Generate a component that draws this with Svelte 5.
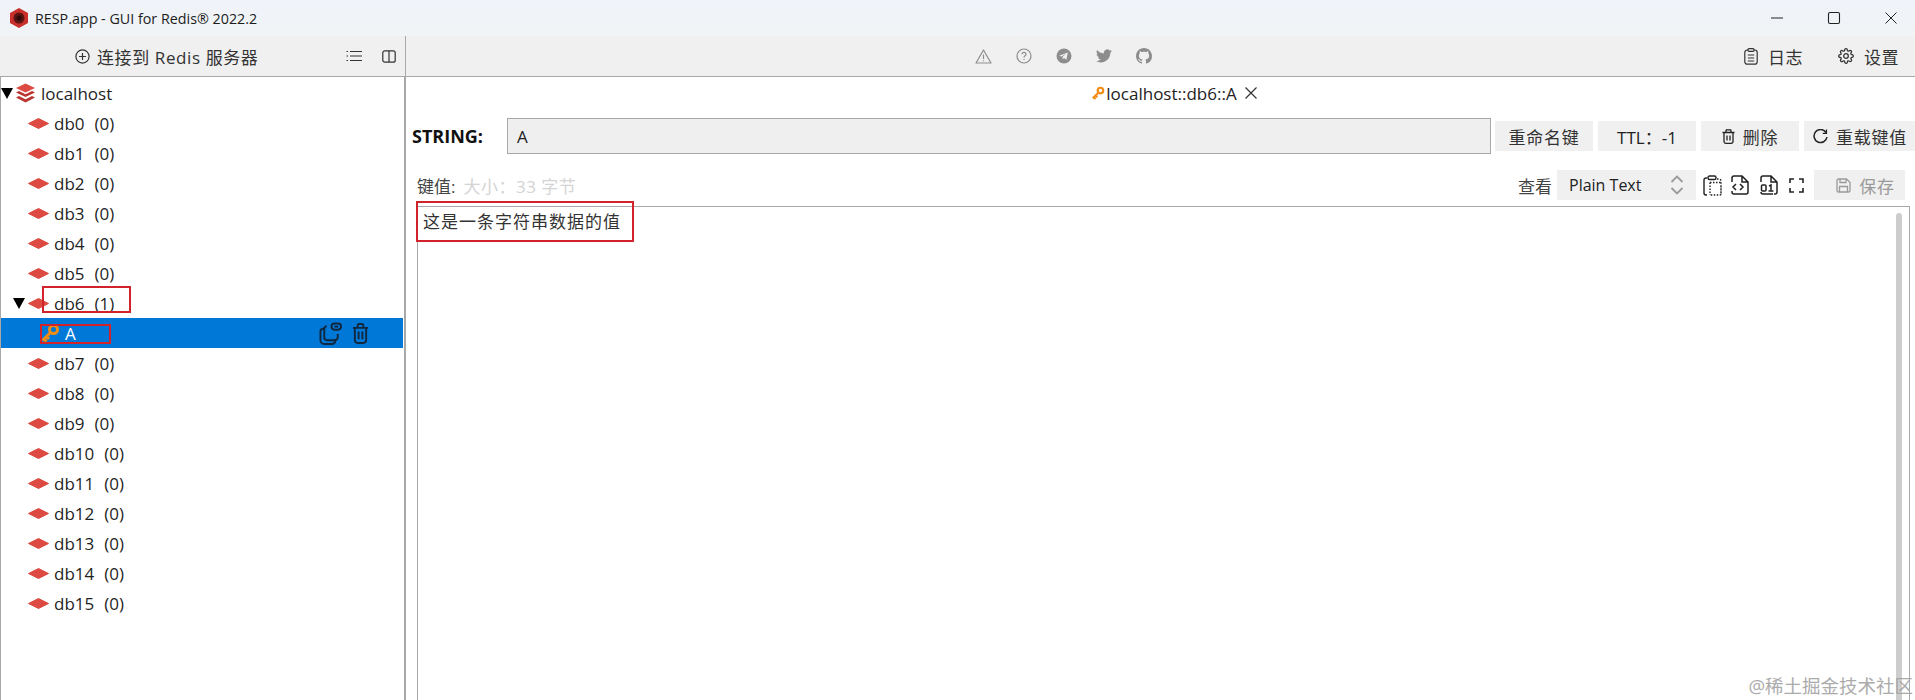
<script>
  const dbs = Array.from({ length: 16 }, (_, i) => ({ name: `db${i}`, count: i === 6 ? 1 : 0 }));
</script>

{#snippet dbIcon()}
  <svg class="db-icon" width="21" height="11" viewBox="0 0 21 11"><path d="M10.5 0.5 20.5 5.5 10.5 10.5 0.5 5.5Z" fill="#dc4a41" stroke="#dc4a41" stroke-linejoin="round"/></svg>
{/snippet}

{#snippet keyIcon(size)}
  <svg width={size} height={size} viewBox="0 0 20 20" fill="none"><circle cx="13.5" cy="6.5" r="4" stroke="#f28c13" stroke-width="3"/><path d="M10.5 9.5 2.5 17.5M4 16l2.5 2.5M6.5 13.5 9 16" stroke="#f28c13" stroke-width="3"/></svg>
{/snippet}

<div class="window">
  <header class="titlebar">
    <svg class="logo" width="18" height="20" viewBox="0 0 18 20"><path d="M9 0 18 5v10l-9 5-9-5V5Z" fill="#c9302c"/><circle cx="9" cy="10" r="5.5" fill="#5a1512"/><circle cx="9" cy="10" r="2.5" fill="#2b0a09"/></svg>
    <span class="title">RESP.app - GUI for Redis® 2022.2</span>
    <div class="win-controls">
      <svg width="14" height="14" viewBox="0 0 14 14"><path d="M1 7h12" stroke="#222" stroke-width="1"/></svg>
      <svg width="14" height="14" viewBox="0 0 14 14" fill="none"><rect x="1.5" y="1.5" width="11" height="11" rx="1.5" stroke="#222" stroke-width="1.1"/></svg>
      <svg width="14" height="14" viewBox="0 0 14 14"><path d="M1.5 1.5l11 11M12.5 1.5l-11 11" stroke="#222" stroke-width="1"/></svg>
    </div>
  </header>

  <div class="toolbar">
    <div class="toolbar-left">
      <button class="connect">
        <svg width="15" height="15" viewBox="0 0 15 15" fill="none" stroke="#333" stroke-width="1.2"><circle cx="7.5" cy="7.5" r="6.6"/><path d="M7.5 4v7M4 7.5h7"/></svg>
        连接到 Redis 服务器
      </button>
      <svg class="tool-list" width="16" height="12" viewBox="0 0 16 12" stroke="#333" stroke-width="1.2"><path d="M4 1.5h12M4 6h12M4 10.5h12M0.5 1.5h1.5M0.5 6h1.5M0.5 10.5h1.5"/></svg>
      <svg class="tool-split" width="14" height="13" viewBox="0 0 14 13" fill="none" stroke="#333" stroke-width="1.2"><rect x="0.8" y="0.8" width="12.4" height="11.4" rx="2"/><path d="M7 1v11"/></svg>
    </div>
    <div class="toolbar-center">
      <svg width="17" height="15" viewBox="0 0 17 15" fill="none" stroke="#8d8d8d" stroke-width="1.2"><path d="M8.5 1 16 14H1Z" stroke-linejoin="round"/><path d="M8.5 5.5v4.5M8.5 11.3v1"/></svg>
      <svg width="16" height="16" viewBox="0 0 16 16" fill="none" stroke="#8d8d8d" stroke-width="1.2"><circle cx="8" cy="8" r="7"/><path d="M6 6.3c0-2.6 4-2.6 4 0 0 1.6-2 1.500-2 3.200M8 11v1"/></svg>
      <svg width="16" height="16" viewBox="0 0 16 16"><circle cx="8" cy="8" r="7.500" fill="#8d8d8d"/><path d="M3.200 7.800 11.800 4.400 10.400 11.800 8 10 6.700 11.200 6.500 9 10 5.800 5.500 8.600Z" fill="#f0f1f2"/></svg>
      <svg width="16" height="14" viewBox="0 0 24 20"><path d="M24 2.400a10 10 0 0 1-2.800.8 5 5 0 0 0 2.200-2.700 10 10 0 0 1-3.100 1.200A4.900 4.900 0 0 0 11.900 6.100 14 14 0 0 1 1.700 1a4.900 4.900 0 0 0 1.500 6.600 4.900 4.900 0 0 1-2.200-.6c0 2.400 1.700 4.400 3.900 4.900a4.900 4.900 0 0 1-2.200.1 4.900 4.900 0 0 0 4.600 3.400A9.900 9.900 0 0 1 0 17.400 14 14 0 0 0 7.500 19.600c9.100 0 14.300-7.700 14-14.600A10 10 0 0 0 24 2.400Z" fill="#8d8d8d"/></svg>
      <svg width="16" height="16" viewBox="0 0 16 16"><path d="M8 0C3.580 0 0 3.580 0 8c0 3.540 2.290 6.530 5.470 7.590.4.070.55-.17.55-.38 0-.19-.01-.82-.01-1.490-2.010.37-2.530-.49-2.690-.94-.09-.23-.48-.94-.82-1.130-.28-.15-.68-.52-.01-.53.63-.01 1.080.58 1.230.82.72 1.210 1.870.87 2.330.66.070-.52.280-.87.510-1.070-1.780-.2-3.640-.89-3.640-3.950 0-.87.310-1.590.82-2.150-.08-.2-.36-1.020.08-2.120 0 0 .67-.21 2.200.82.640-.18 1.320-.27 2-.27s1.360.09 2 .27c1.530-1.040 2.200-.82 2.200-.82.44 1.100.16 1.920.08 2.120.51.560.82 1.270.82 2.150 0 3.070-1.870 3.750-3.650 3.950.29.250.54.730.54 1.480 0 1.070-.01 1.930-.01 2.200 0 .21.150.46.550.38A8 8 0 0 0 16 8c0-4.420-3.580-8-8-8Z" fill="#8d8d8d"/></svg>
    </div>
    <div class="toolbar-right">
      <button class="flat">
        <svg width="14" height="17" viewBox="0 0 14 17" fill="none" stroke="#333" stroke-width="1.2"><rect x="0.8" y="2" width="12.400" height="14.200" rx="2.500"/><rect x="4" y="0.700" width="6" height="2.600" rx="1" fill="#f0f0f0"/><path d="M3.800 7h6.400M3.800 10h6.400M3.800 13h6.400"/></svg>
        日志
      </button>
      <button class="flat">
        <svg width="16" height="16" viewBox="0 0 24 24" fill="none" stroke="#333" stroke-width="1.900"><circle cx="12" cy="12" r="3.500"/><path d="M19.4 15a1.65 1.65 0 0 0 .33 1.82l.06.06a2 2 0 0 1 0 2.83 2 2 0 0 1-2.83 0l-.06-.06a1.65 1.65 0 0 0-1.82-.33 1.65 1.65 0 0 0-1 1.51V21a2 2 0 0 1-2 2 2 2 0 0 1-2-2v-.09A1.65 1.65 0 0 0 9 19.4a1.65 1.65 0 0 0-1.82.33l-.06.06a2 2 0 0 1-2.83 0 2 2 0 0 1 0-2.83l.06-.06a1.65 1.65 0 0 0 .33-1.82 1.65 1.65 0 0 0-1.51-1H3a2 2 0 0 1-2-2 2 2 0 0 1 2-2h.09A1.65 1.65 0 0 0 4.600 9a1.65 1.65 0 0 0-.33-1.82l-.06-.06a2 2 0 0 1 0-2.83 2 2 0 0 1 2.83 0l.06.06a1.65 1.65 0 0 0 1.82.33H9a1.65 1.65 0 0 0 1-1.51V3a2 2 0 0 1 2-2 2 2 0 0 1 2 2v.09a1.65 1.65 0 0 0 1 1.51 1.65 1.65 0 0 0 1.82-.33l.06-.06a2 2 0 0 1 2.83 0 2 2 0 0 1 0 2.83l-.06.06a1.65 1.65 0 0 0-.33 1.82V9a1.65 1.65 0 0 0 1.51 1H21a2 2 0 0 1 2 2 2 2 0 0 1-2 2h-.09a1.65 1.65 0 0 0-1.51 1z"/></svg>
        设置
      </button>
    </div>
  </div>

  <div class="body">
    <aside class="tree">
      <div class="row root">
        <span class="arrow big"></span>
        <svg width="21" height="21" viewBox="0 0 21 21"><path d="M10.500 0.500 20 5 10.500 9.500 1 5Z" fill="#dc4a41"/><path d="M1 9.500l3-1.400 6.500 3.100L17 8.100l3 1.400-9.500 4.500Z" fill="#b9352f"/><path d="M1 14.500l3-1.400 6.500 3.100L17 13.100l3 1.400-9.500 5Z" fill="#b9352f"/></svg>
        <span>localhost</span>
      </div>
      {#each dbs as db}
        <div class="row db">
          {#if db.count}<span class="arrow"></span>{/if}
          {@render dbIcon()}
          <span class="db-name">{db.name}</span>
          <span>({db.count})</span>
        </div>
        {#if db.count}
          <div class="row key">
            {@render keyIcon(20)}
            <span class="key-name">A</span>
            <svg class="key-copy" width="23" height="23" viewBox="0 0 24 24" fill="none" stroke="#10273d" stroke-width="2"><path d="M6 7H4a3 3 0 0 0-2.500 3v9a4 4 0 0 0 4 4h8a4 4 0 0 0 3.500-3v-2"/><path d="M8 4.500a2.500 2.500 0 0 0-2.500 2.500v9a3 3 0 0 0 3 3h8a3 3 0 0 0 3-3v-3.500"/><rect x="13" y="1.500" width="10" height="6.500" rx="3.200"/><path d="M16 4.800h4"/></svg>
            <svg class="key-trash" width="17" height="21" viewBox="0 0 18 22" fill="none" stroke="#10273d" stroke-width="2"><path d="M1 5h16M6 5V2.500A1.500 1.500 0 0 1 7.500 1h3A1.500 1.500 0 0 1 12 2.500V5M3 5v13a3 3 0 0 0 3 3h6a3 3 0 0 0 3-3V5M7 9v8M11 9v8"/></svg>
          </div>
        {/if}
      {/each}
    </aside>

    <main class="content">
      <div class="tab">
        {@render keyIcon(14)}
        <span>localhost::db6::A</span>
        <svg width="14" height="14" viewBox="0 0 14 14"><path d="M1.500 1.500l11 11M12.500 1.500l-11 11" stroke="#333" stroke-width="1.200"/></svg>
      </div>

      <div class="key-row">
        <b class="type">STRING:</b>
        <div class="key-input">A</div>
        <button class="btn w98">重命名键</button>
        <button class="btn w98 ttl">TTL：-1</button>
        <button class="btn w98">
          <svg width="13" height="15" viewBox="0 0 13 15" fill="none" stroke="#222" stroke-width="1.300"><path d="M0.500 3.500h12M4 3.500V1.500A.8.8 0 0 1 5 .8h3a.8.8 0 0 1 1 .7v2M2 3.500v9a1.800 1.800 0 0 0 1.800 1.800h5.400a1.800 1.800 0 0 0 1.800-1.800v-9M5 6.500v5M8 6.500v5"/></svg>
          删除
        </button>
        <button class="btn reload">
          <svg width="15" height="15" viewBox="0 0 15 15" fill="none" stroke="#222" stroke-width="1.500"><path d="M13 3.500A6.500 6.500 0 1 0 14 8"/><path d="M13.500 0.500v3.800H9.800" stroke-width="1.200"/></svg>
          重载键值
        </button>
      </div>

      <div class="value-row">
        <span class="value-label">键值:</span>
        <span class="value-size">大小：33 字节</span>
        <span class="view-label">查看</span>
        <div class="select">
          <span>Plain Text</span>
          <svg width="14" height="20" viewBox="0 0 14 20" fill="none" stroke="#9a9a9a" stroke-width="1.800"><path d="M1.500 7 7 1.500 12.500 7M1.500 13 7 18.500 12.500 13"/></svg>
        </div>
        <div class="value-tools">
          <svg width="20" height="21" viewBox="0 0 20 21" fill="none" stroke="#222" stroke-width="1.400"><path d="M4 3H3a2 2 0 0 0-2 2v13a2 2 0 0 0 2 2h1"/><rect x="5" y="1" width="8" height="3.500" rx="1.500"/><path d="M14 4h2a2 2 0 0 1 2 2v13a1 1 0 0 1-1 1H7M7 7.500h11M7 7.500v12.500M18 11v8" stroke-dasharray="1.500 1.500"/></svg>
          <svg class="gap-code" width="18" height="20" viewBox="0 0 18 20" fill="none" stroke="#222" stroke-width="1.500"><path d="M1 7V3a2 2 0 0 1 2-2h8l6 6v10a2 2 0 0 1-2 2H3a2 2 0 0 1-2-2v-1M11 1v6h6M5 9l-3 3 3 3M9 9l3 3-3 3"/></svg>
          <svg width="18" height="20" viewBox="0 0 18 20" fill="none" stroke="#222" stroke-width="1.500"><path d="M1 7V3a2 2 0 0 1 2-2h8l6 6v10a2 2 0 0 1-2 2h-1M11 1v6h6M1 17v0a2 2 0 0 0 2 2h10"/><rect x="1.500" y="10" width="4.500" height="6" rx="1"/><path d="M9 11l2-1v6M8.500 16h5"/></svg>
          <svg width="15" height="15" viewBox="0 0 15 15" fill="none" stroke="#222" stroke-width="1.600"><path d="M1 5V1h4M10 1h4v4M14 10v4h-4M5 14H1v-4"/></svg>
        </div>
        <button class="btn save">
          <svg width="15" height="15" viewBox="0 0 15 15" fill="none" stroke="#9a9a9a" stroke-width="1.300"><path d="M1 2.500A1.500 1.500 0 0 1 2.500 1h8L14 4.500v8a1.500 1.500 0 0 1-1.500 1.500h-10A1.500 1.500 0 0 1 1 12.500Z"/><path d="M4 1v3.500h6V1M3.500 14V8.500h8V14"/></svg>
          保存
        </button>
      </div>

      <div class="editor">
        <div class="editor-text">这是一条字符串数据的值</div>
        <div class="scrollbar"></div>
      </div>
    </main>
  </div>

  <div class="mark m1"></div>
  <div class="mark m2"></div>
  <div class="mark m3"></div>
  <div class="watermark">@稀土掘金技术社区</div>
</div>

<style>
  :global(body) {
    margin: 0;
    overflow: hidden;
    background: #fff;
  }
  .window {
    position: relative;
    width: 1915px;
    height: 700px;
    overflow: hidden;
    font-family: "Open Sans", "Noto Sans CJK SC", sans-serif;
    font-size: 17px;
    color: #222;
  }
  button {
    font: inherit;
    color: inherit;
    border: 0;
    background: none;
    padding: 0;
    display: flex;
    align-items: center;
    justify-content: center;
  }
  .titlebar {
    height: 36px;
    display: flex;
    align-items: center;
    padding-left: 10px;
    background: linear-gradient(#eff3f9, #f1f3f5);
    font-family: "Open Sans", sans-serif;
    font-size: 14.3px;
    box-sizing: border-box;
  }
  .title {
    margin-left: 7px;
    color: #1d1d1d;
  }
  .win-controls {
    margin-left: auto;
    margin-right: 17px;
    display: flex;
    gap: 43px;
  }
  .toolbar {
    height: 41px;
    display: flex;
    align-items: center;
    background: #f0f0f0;
    border-bottom: 1px solid #a8a8a8;
    box-sizing: border-box;
    color: #333;
  }
  .toolbar-left {
    width: 406px;
    height: 40px;
    flex: none;
    display: flex;
    align-items: center;
    box-sizing: border-box;
    border-right: 1px solid #a8a8a8;
  }
  .connect {
    gap: 7px;
    margin-left: 75px;
    letter-spacing: 0.6px;
  }
  .tool-list {
    margin-left: 88px;
  }
  .tool-split {
    margin-left: 20px;
  }
  .toolbar-center {
    flex: 1;
    display: flex;
    justify-content: center;
    align-items: center;
    gap: 24px;
    padding-right: 24px;
  }
  .toolbar-right {
    display: flex;
    gap: 35px;
    padding-right: 16px;
  }
  .flat {
    gap: 10px;
    letter-spacing: 0.5px;
  }
  .body {
    display: flex;
    height: 623px;
  }
  .tree {
    width: 406px;
    flex: none;
    box-sizing: border-box;
    border-left: 1px solid #a8a8a8;
    border-right: 2px solid #a8a8a8;
    padding-top: 1px;
  }
  .row {
    height: 30px;
    display: flex;
    align-items: center;
    position: relative;
    color: #1f1f1f;
  }
  .root {
    padding-left: 14px;
    gap: 5px;
  }
  .arrow {
    position: absolute;
    left: 12px;
    top: 10px;
    width: 0;
    height: 0;
    border-left: 6px solid transparent;
    border-right: 6px solid transparent;
    border-top: 11px solid #000;
  }
  .arrow.big {
    left: 0;
  }
  .db {
    padding-left: 27px;
  }
  .db-name {
    margin-left: 5px;
    margin-right: 10px;
  }
  .key {
    background: #0078d7;
    color: #fff;
    padding-left: 39px;
    margin-right: 1px;
  }
  .key-name {
    margin-left: 5px;
  }
  .key-copy {
    margin-left: auto;
  }
  .key-trash {
    margin-left: 10px;
    margin-right: 34px;
  }
  .content {
    flex: 1;
    min-width: 0;
    display: flex;
    flex-direction: column;
  }
  .tab {
    height: 32px;
    display: flex;
    align-items: center;
    justify-content: center;
    margin-left: 28px;
    gap: 1px;
  }
  .tab svg:last-child {
    margin-left: 6px;
  }
  .key-row {
    display: flex;
    align-items: center;
    height: 36px;
    margin-top: 9px;
    padding-left: 6px;
  }
  .type {
    width: 95px;
    flex: none;
    font-size: 18px;
    color: #111;
  }
  .key-input {
    flex: none;
    width: 984px;
    height: 36px;
    box-sizing: border-box;
    border: 1px solid #a8a8a8;
    background: #efefef;
    padding-left: 9px;
    display: flex;
    align-items: center;
    margin-right: 4px;
  }
  .btn {
    height: 30px;
    background: #f0f0f0;
    margin-right: 5px;
    gap: 8px;
    letter-spacing: 0.8px;
    flex: none;
    color: #333;
  }
  .btn.ttl {
    letter-spacing: 0;
    color: #222;
  }
  .w98 {
    width: 98px;
  }
  .reload {
    width: 112px;
    margin-right: 0;
  }
  .value-row {
    display: flex;
    align-items: center;
    height: 30px;
    margin-top: 16px;
    padding-left: 11px;
    color: #444;
  }
  .value-size {
    color: #d4d4d4;
    margin-left: 8px;
    letter-spacing: 0.5px;
  }
  .view-label {
    margin-left: auto;
    margin-right: 5px;
    letter-spacing: 0;
    color: #444;
  }
  .select {
    width: 139px;
    height: 30px;
    box-sizing: border-box;
    background: #f0f0f0;
    padding: 0 12px;
    display: flex;
    align-items: center;
    justify-content: space-between;
    font-size: 16px;
    color: #222;
  }
  .value-tools {
    display: flex;
    align-items: center;
    gap: 11px;
    margin: 0 10px 0 7px;
  }
  .gap-code {
    margin-left: -3px;
  }
  .save {
    width: 91px;
    margin-right: 10px;
    padding-left: 12px;
    box-sizing: border-box;
    color: #9a9a9a;
  }
  .editor {
    margin: 6px 5px 0 11px;
    flex: 1;
    border: 1px solid #a8a8a8;
    border-bottom: 0;
    position: relative;
  }
  .editor-text {
    padding: 1px 0 0 5px;
    color: #333;
    letter-spacing: 1px;
  }
  .scrollbar {
    position: absolute;
    right: 7px;
    top: 6px;
    bottom: 0;
    width: 6px;
    border-radius: 3px 3px 0 0;
    background: #cdcdcd;
  }
  .mark {
    position: absolute;
    border: 2px solid #d2232a;
    box-sizing: border-box;
  }
  .m1 {
    left: 42px;
    top: 286px;
    width: 89px;
    height: 27px;
  }
  .m2 {
    left: 40px;
    top: 324px;
    width: 71px;
    height: 20px;
  }
  .m3 {
    left: 416px;
    top: 201px;
    width: 218px;
    height: 41px;
  }
  .watermark {
    position: absolute;
    right: 2px;
    bottom: 2px;
    font-size: 18.5px;
    color: #a3a3a3;
    opacity: 0.9;
  }
</style>
